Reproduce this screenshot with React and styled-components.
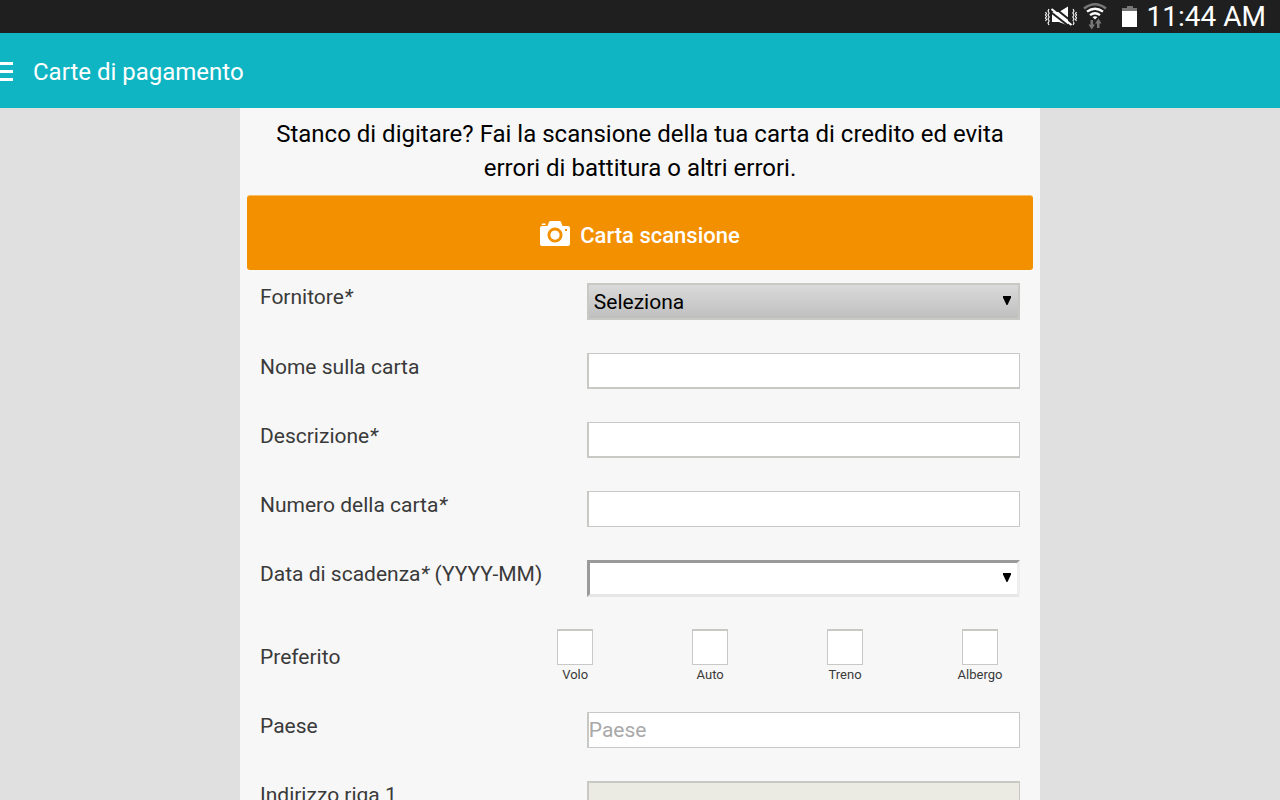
import React, { useState } from 'react';
import styled, { createGlobalStyle } from 'styled-components';

const GlobalStyle = createGlobalStyle`
  * {
    box-sizing: border-box;
  }

  body {
    margin: 0;
    font-family: Roboto, "Noto Sans", sans-serif;
    background-color: #e0e0e0;
  }

  input,
  select,
  button {
    font-family: inherit;
  }
`;

const Page = styled.div`
  display: flex;
  flex-direction: column;
  height: 100vh;
`;

const StatusBar = styled.div`
  display: flex;
  flex: none;
  align-items: center;
  justify-content: flex-end;
  height: 33px;
  padding-right: 14px;
  background-color: #1f1f1f;
  color: #fff;
`;

const StatusIcons = styled.svg`
  width: 96px;
  height: 33px;
  margin-right: 7px;
`;

const Clock = styled.span`
  font-size: 28px;
  line-height: 33px;
`;

const Header = styled.header`
  display: flex;
  flex: none;
  align-items: center;
  gap: 20px;
  height: 75px;
  padding-top: 2px;
  background-color: #0fb5c3;
  color: #fff;

  h1 {
    margin: 0;
    font-size: 24px;
    font-weight: 400;
  }
`;

const MenuButton = styled.button`
  display: flex;
  padding: 0;
  border: none;
  background: none;
  cursor: pointer;
`;

const Scroller = styled.main`
  flex: 1;
  overflow-y: auto;
  scrollbar-width: none;
`;

const Panel = styled.div`
  max-width: 800px;
  margin: 0 auto;
  padding: 9px 7px 20px;
  background-color: #f7f7f7;
`;

const Intro = styled.p`
  margin: 0 0 10px;
  font-size: 24px;
  line-height: 34px;
  text-align: center;
  color: #000;
`;

const ScanButton = styled.button`
  display: flex;
  align-items: center;
  justify-content: center;
  gap: 10px;
  width: 100%;
  height: 75px;
  padding: 4px 0 0;
  border: none;
  border-top: 1px solid #f8bf6b;
  border-radius: 3px;
  background-color: #f39000;
  color: #fff;
  font-size: 22px;
  font-weight: 500;
  cursor: pointer;
`;

const Form = styled.form`
  display: flex;
  flex-direction: column;
  gap: 33px;
  padding: 13px 13px 0;
`;

const Row = styled.div`
  display: flex;
  justify-content: space-between;
  align-items: ${(props) => (props.$center ? 'center' : 'flex-start')};
`;

const Label = styled.label`
  font-size: 21px;
  line-height: 29px;
  color: #3a3a3a;
`;

const GroupLabel = styled.span`
  padding-top: 6px;
  font-size: 21px;
  line-height: 29px;
  color: #3a3a3a;
`;

const TextInput = styled.input`
  width: 57%;
  height: 36px;
  padding: 0;
  border: 1px solid #c8c8c4;
  border-left-width: 2px;
  border-bottom-width: ${(props) => (props.$thin ? '1px' : '2px')};
  border-radius: 0;
  background-color: #fff;
  font-size: 21px;
  color: #000;
  outline: none;

  &::placeholder {
    color: #a9a9a9;
    opacity: 1;
  }

  &:disabled {
    border-top-width: 2px;
    background-color: #ebebe4;
  }
`;

const SelectWrap = styled.div`
  position: relative;
  width: 57%;
  height: 37px;
  margin-bottom: ${(props) => (props.$inset ? '-1px' : '0')};
`;

const Select = styled.select`
  appearance: none;
  display: block;
  width: 100%;
  height: 37px;
  padding: 0 30px 0 5px;
  border: ${(props) => (props.$inset ? '3px solid' : '2px solid')};
  border-color: ${(props) => (props.$inset ? '#9a9a9a #eee #e6e6e6 #9a9a9a' : '#c8c8c4')};
  border-radius: ${(props) => (props.$inset ? '0 0 2px 0' : '0')};
  background: ${(props) => (props.$inset ? '#fff' : 'linear-gradient(#dadada, #bfbfbf)')};
  font-size: 21px;
  color: #000;
  outline: none;
`;

// Sits over the select, the native arrow is hidden
const Arrow = styled.svg`
  position: absolute;
  top: 13px;
  right: 9px;
  width: 8px;
  height: 9px;
  pointer-events: none;
`;

const Checks = styled.div`
  display: flex;
  justify-content: space-between;
  width: 58%;
  height: 50px;
  margin-right: 22px;
`;

const CheckItem = styled.label`
  display: flex;
  flex-direction: column;
  align-items: center;
  width: 36px;
  font-size: 13px;
  line-height: 14px;
  white-space: nowrap;
  color: #3a3a3a;

  input {
    appearance: none;
    flex: none;
    width: 36px;
    height: 36px;
    margin: 0 0 3px;
    border: 1px solid #c8c8c4;
    border-top-width: 2px;
    background-color: #fff;
  }

  input:checked {
    background-color: #0fb5c3;
  }
`;

const favourites = ['Volo', 'Auto', 'Treno', 'Albergo'];

function SelectField({ id, inset, children }) {
  return (
    <SelectWrap $inset={inset}>
      <Select id={id} $inset={inset}>
        {children}
      </Select>
      <Arrow viewBox="0 0 8 9">
        <path d="M0 0h8v1.500L4.500 9h-1L0 1.500z" fill="#000" />
      </Arrow>
    </SelectWrap>
  );
}

function App() {
  const [checked, setChecked] = useState({});

  const toggle = (name) => {
    setChecked({ ...checked, [name]: !checked[name] });
  };

  return (
    <Page>
      <GlobalStyle />
      <StatusBar>
        <StatusIcons viewBox="0 0 96 33" fill="none">
          {/* vibrate / mute */}
          <path d="M1.500 12l1 1.500-1 1.500 1 1.500-1 1.500 1 1.500-1 1.500M5 9l-1 2 1.200 2L4 15l1.200 2L4 19l1.200 2L4 23l1 2" stroke="#fff" strokeWidth="1.100" />
          <path d="M32.500 12l-1 1.500 1 1.500-1 1.500 1 1.500-1 1.500 1 1.500M29 9l1 2-1.200 2 1.200 2-1.200 2 1.200 2-1.200 2 1.200 2-1 2" stroke="#fff" strokeWidth="1.100" />
          <path d="M8 12h7l9-5.500v19L15 22H8z" fill="#fff" />
          <path d="M6 11.500L26 27" stroke="#1f1f1f" strokeWidth="2" />
          <path d="M9.500 7L29 22.500" stroke="#1f1f1f" strokeWidth="2" />
          <path d="M7.500 9L27.500 25" stroke="#fff" strokeWidth="2.200" />
          {/* wifi */}
          <path d="M40 8.500q11-8.500 22 0" stroke="#777" strokeWidth="2.500" />
          <path d="M43 11.700q8-6 16 0M46 15.200q5-4 10 0" stroke="#fff" strokeWidth="2.300" />
          <path d="M48.500 17q2.500-1.500 5 0L51 19.500z" fill="#fff" />
          <path d="M46.500 20h2.500v4.500h2L47.700 29.500 44.500 24.500h2zM53 28v-4.500h-2L54.500 18.500 57.500 23.500h-2V28z" fill="#777" />
          {/* battery */}
          <path d="M78 11V8h5V6h6v2h4v3z" fill="#777" />
          <path d="M78 11h15v16H78z" fill="#fff" />
        </StatusIcons>
        <Clock>11:44 AM</Clock>
      </StatusBar>
      <Header>
        <MenuButton type="button" aria-label="Menu">
          <svg width="13" height="19" viewBox="0 0 13 19" fill="#fff">
            <path d="M0 0h13v3H0zM0 8h13v3H0zM0 16h13v3H0z" />
          </svg>
        </MenuButton>
        <h1>Carte di pagamento</h1>
      </Header>
      <Scroller>
        <Panel>
          <Intro>
            Stanco di digitare? Fai la scansione della tua carta di credito ed evita errori di battitura o altri errori.
          </Intro>
          <ScanButton type="button">
            <svg width="30" height="29" viewBox="0 0 30 29">
              <path
                fill="#fff"
                fillRule="evenodd"
                d="M2 5h5.500l1.500-4Q9.300 0 10.500 0h9q1.200 0 1.500 1l1.500 4H28q2 0 2 2v16q0 2-2 2H2q-2 0-2-2V7q0-2 2-2zM15 6.500a7.500 7.500 0 1 0 .01 0zM25 8v2h2V8zM15 9.500a4.600 4.600 0 1 1-.01 0zM2 2.500h3.500V4H1.500z"
              />
            </svg>
            Carta scansione
          </ScanButton>
          <Form>
            <Row>
              <Label htmlFor="vendor">
                Fornitore<i>*</i>
              </Label>
              <SelectField id="vendor">
                <option>Seleziona</option>
              </SelectField>
            </Row>
            <Row>
              <Label htmlFor="cardName">Nome sulla carta</Label>
              <TextInput id="cardName" type="text" />
            </Row>
            <Row>
              <Label htmlFor="description">
                Descrizione<i>*</i>
              </Label>
              <TextInput id="description" type="text" />
            </Row>
            <Row>
              <Label htmlFor="cardNumber">
                Numero della carta<i>*</i>
              </Label>
              <TextInput id="cardNumber" type="text" $thin />
            </Row>
            <Row>
              <Label htmlFor="expiry">
                Data di scadenza<i>*</i> (YYYY-MM)
              </Label>
              <SelectField id="expiry" inset>
                <option></option>
              </SelectField>
            </Row>
            <Row $center>
              <GroupLabel>Preferito</GroupLabel>
              <Checks>
                {favourites.map((name) => (
                  <CheckItem key={name}>
                    <input type="checkbox" checked={!!checked[name]} onChange={() => toggle(name)} />
                    {name}
                  </CheckItem>
                ))}
              </Checks>
            </Row>
            <Row>
              <Label htmlFor="country">Paese</Label>
              <TextInput id="country" type="text" placeholder="Paese" $thin />
            </Row>
            <Row>
              <Label htmlFor="address1">Indirizzo riga 1</Label>
              <TextInput id="address1" type="text" disabled />
            </Row>
          </Form>
        </Panel>
      </Scroller>
    </Page>
  );
}

export default App;
